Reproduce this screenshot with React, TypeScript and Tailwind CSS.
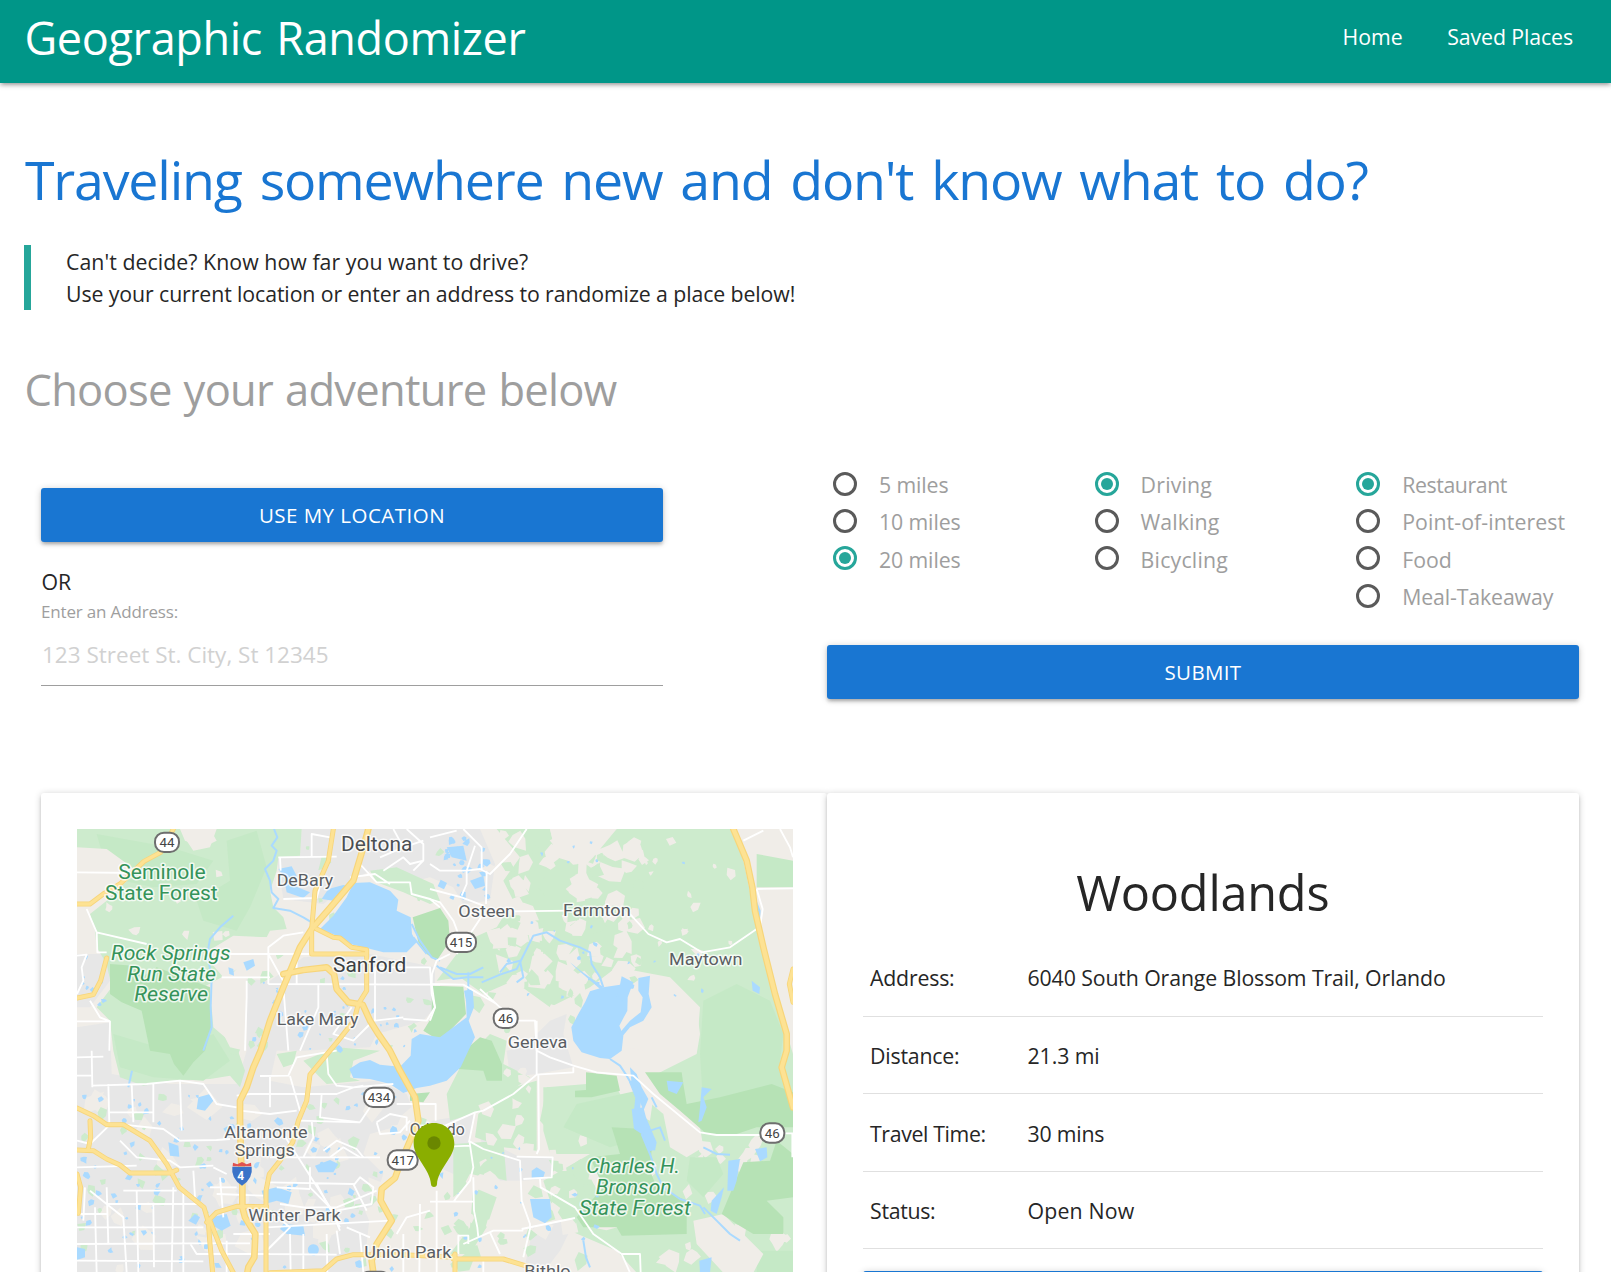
import { useState } from "react";

const SHADOW = "shadow-[0_3px_3px_0_rgba(0,0,0,0.14),0_4px_2px_-3px_rgba(0,0,0,0.12),0_1px_7px_0_rgba(0,0,0,0.2)]";

type Option = { label: string; tracking: string };

const groups: { name: string; initial: number; options: Option[] }[] = [
  {
    name: "distance",
    initial: 2,
    options: [
      { label: "5 miles", tracking: "tracking-[-0.12px]" },
      { label: "10 miles", tracking: "tracking-[-0.12px]" },
      { label: "20 miles", tracking: "tracking-[-0.12px]" },
    ],
  },
  {
    name: "travel",
    initial: 0,
    options: [
      { label: "Driving", tracking: "tracking-[0.19px]" },
      { label: "Walking", tracking: "tracking-[0.1px]" },
      { label: "Bicycling", tracking: "tracking-[0.2px]" },
    ],
  },
  {
    name: "place",
    initial: 0,
    options: [
      { label: "Restaurant", tracking: "tracking-[-0.41px]" },
      { label: "Point-of-interest", tracking: "tracking-[0.08px]" },
      { label: "Food", tracking: "tracking-[0px]" },
      { label: "Meal-Takeaway", tracking: "tracking-[-0.13px]" },
    ],
  },
];

const details = [
  { label: "Address:", value: "6040 South Orange Blossom Trail, Orlando", lt: "tracking-[-0.2px]", vt: "tracking-[-0.12px]" },
  { label: "Distance:", value: "21.3 mi", lt: "tracking-[-0.2px]", vt: "tracking-[-0.1px]" },
  { label: "Travel Time:", value: "30 mins", lt: "tracking-[-0.37px]", vt: "tracking-[-0.2px]" },
  { label: "Status:", value: "Open Now", lt: "tracking-[-0.3px]", vt: "tracking-[0.19px]" },
];

function RadioGroup({ name, initial, options }: (typeof groups)[number]) {
  const [selected, setSelected] = useState(initial);
  return (
    <div className="w-[261.6px] shrink-0">
      {options.map((o, i) => (
        <label key={o.label} className="flex h-[37.2px] items-center gap-[22px]">
          <input type="radio" name={name} className="sr-only" checked={selected === i} onChange={() => setSelected(i)} />
          <span
            className={
              selected === i
                ? "flex size-6 shrink-0 items-center justify-center rounded-full border-[3px] border-[#26a69a]"
                : "size-6 shrink-0 rounded-full border-[3px] border-[#5a5a5a]"
            }
          >
            {selected === i && <span className="size-3 rounded-full bg-[#26a69a]" />}
          </span>
          <span className={`whitespace-nowrap pt-[2px] text-[21.3px] text-[#9e9e9e] ${o.tracking}`}>{o.label}</span>
        </label>
      ))}
    </div>
  );
}

/* ---------- Map ---------- */

// Small seeded generator so the terrain texture is stable between renders.
function patches(seed: number, count: number, x0: number, y0: number, x1: number, y1: number, size: number) {
  let s = seed;
  const rnd = () => {
    s = (s * 1664525 + 1013904223) % 4294967296;
    return s / 4294967296;
  };
  let d = "";
  for (let i = 0; i < count; i++) {
    const cx = x0 + rnd() * (x1 - x0);
    const cy = y0 + rnd() * (y1 - y0);
    const r = size * (0.35 + rnd() * 0.65);
    const n = 4 + Math.floor(rnd() * 4);
    const tilt = rnd() * 6.28;
    for (let k = 0; k < n; k++) {
      const a = tilt + (k / n) * 6.28;
      const q = r * (0.4 + rnd() * 0.7);
      d += `${k ? "L" : "M"}${(cx + Math.cos(a) * q).toFixed(0)} ${(cy + Math.sin(a) * q).toFixed(0)}`;
    }
    d += "Z";
  }
  return d;
}

const beigeSpecks =
  patches(11, 85, 1260, 40, 1720, 580, 46) + patches(5, 16, 1700, 60, 1990, 480, 24) + patches(29, 12, 90, 60, 520, 360, 26) + patches(31, 40, 1200, 700, 1640, 1340, 40) + patches(37, 24, 1720, 960, 2160, 1340, 40);
const greenSpecks = patches(7, 34, 1180, 60, 1720, 640, 34) + patches(13, 60, 30, 820, 1080, 1350, 22) + patches(17, 26, 700, 60, 1180, 700, 22) + patches(19, 22, 1110, 1000, 1560, 1350, 40) + patches(61, 12, 460, 370, 640, 700, 26);
const urbanSpecks = patches(23, 50, 30, 830, 1080, 1350, 60);
const waterSpecks =
  patches(3, 95, 30, 820, 1010, 1350, 15) + patches(41, 26, 1110, 50, 1260, 230, 17) + patches(43, 24, 540, 470, 860, 700, 13) + patches(47, 26, 1300, 60, 1900, 560, 10) + patches(53, 22, 1150, 980, 1600, 1340, 11) + patches(59, 10, 30, 400, 110, 560, 14) + patches(67, 12, 900, 560, 1090, 700, 10);

const waters = [
  "M750 325L790 285 830 230 850 187 900 185 960 210 985 237 980 270 1022 290 1026 340 1040 365 1010 395 940 395 890 382 840 370 800 345Z",
  "M755 235L775 205 820 193 845 195 830 215 790 240Z",
  "M640 165L625 145 665 137 680 165 672 195 720 215 700 232 650 215Z",
  "M1025 655L1050 640 1110 650 1150 620 1190 590 1188 540 1182 510 1208 505 1212 560 1196 600 1215 650 1200 680 1172 740 1130 780 1080 795 1040 802 1000 817 960 790 900 775 850 772 838 745 870 725 900 718 930 732 990 738 1022 705Z",
  "M1560 512L1600 500 1650 492 1655 467 1690 485 1673 530 1672 570 1648 615 1660 645 1655 690 1620 715 1590 712 1535 695 1510 660 1504 620 1525 580 1545 545Z",
  "M1705 472L1740 465 1736 520 1745 560 1720 600 1680 620 1655 650 1648 638 1680 600 1712 575 1718 530 1705 510Z",
  "M1685 865L1720 860 1728 890 1745 930 1760 965 1755 990 1735 980 1715 940 1692 925Z",
  "M1680 740L1700 760 1715 800 1735 835 1720 870 1705 830 1685 790Z",
  "M1895 800L1925 805 1900 830 1910 860 1895 900 1885 905 1890 860Z",
  "M1790 780L1840 785 1820 820 1795 810Z",
  "M1975 1020L2010 1015 2000 1080 1990 1110 1972 1110Z",
  "M2055 985L2090 980 2092 1010 2070 1022Z",
  "M1925 1140L1962 1100 1955 1130 1940 1180 1922 1170Z",
  "M1380 1135L1440 1135 1445 1190 1425 1208 1390 1190Z",
  "M1385 1050L1400 1040 1425 1055 1420 1070 1385 1072Z",
  "M575 1110L620 1100 665 1115 655 1150 620 1140 585 1150Z",
  "M735 1035L780 1018 805 1030 790 1055 745 1055Z",
  "M640 1210L700 1215 705 1245 650 1240 630 1225Z",
  "M425 1190L470 1180 482 1215 455 1230 430 1215Z",
  "M385 830L420 820 430 840 405 870 380 865Z",
  "M295 965L325 975 328 1008 300 1005Z",
  "M355 1200L375 1180 390 1190 378 1212Z",
  "M21 1280L45 1285 45 1310 21 1318Z",
  "M1888 1320L1925 1310 1920 1356 1890 1356Z",
  "M1515 440L1500 425 1525 445 1600 500 1590 505Z",
  "M2045 480L2070 500 2068 520 2048 510Z",
  "M2060 240L2072 270 2068 320 2060 300Z",
  "M520 425L550 415 555 435 530 450Z",
  "M475 440L490 445 492 465 478 460Z",
  "M1130 80L1180 75 1190 120 1145 110Z",
  "M1200 180L1240 165 1245 195 1215 205Z",
  "M1105 1060L1120 1055 1118 1075Z",
  "M715 1280A16 16 0 1 1 745 1295A16 16 0 0 1 715 1280Z",
];

const rivers = [
  "M612 25L622 50 605 75 620 90 610 120 585 145 600 180 605 215 625 235 610 262 660 270 700 290 725 305",
  "M490 285L450 320 420 355 412 400 425 470 422 560 425 620 400 690",
  "M1235 485L1290 462 1340 445 1370 385 1390 345 1430 335 1470 360 1530 380 1560 395 1565 430 1590 470 1600 500",
  "M1110 440L1160 460 1200 460 1240 440M1195 455L1195 510M1100 435L1150 475 1190 470 1240 470M1290 455L1310 430 1350 420 1360 470 1340 485",
  "M1620 715L1650 735 1670 765 1690 800",
  "M1715 940L1740 1000 1760 1060 1780 1100 1830 1135 1890 1155 1905 1180",
  "M1740 930L1770 920 1785 960M1745 830L1760 860",
  "M1900 1160L1940 1200 1980 1240 2010 1260M1900 980L1940 1000 1980 1002",
  "M1540 1260L1548 1310 1560 1340",
  "M1025 310L1050 360 1085 410 1110 420M1030 350L1070 400",
  "M186 750L175 800",
];

const minorRoads = [
  "M21 155L215 157M50 265L80 335 230 370M80 335L82 395 110 395M21 405L50 402 35 440 40 480 21 520M60 540L90 590 120 602M21 602L120 602 118 690M65 690L67 800",
  "M625 110L800 108M725 110L725 40 780 50M630 110L632 150M640 235L740 232 760 160M930 110L1000 80 1060 60M940 150L1000 110 1020 130 1060 120M1000 80L970 25M1010 25L1060 70 1060 120 1030 150",
  "M870 130L920 185 1020 185 1025 220 1080 235 1110 260M840 170L915 160 960 190M480 400L600 400M595 490L595 380 640 345 700 335M600 400L725 400M595 490L1110 492M455 470L600 470M530 480L530 530 525 690M640 500L655 690M745 490L745 560 690 690M915 440L915 600 1000 590M915 440L1080 440 1085 520 1095 560 1070 600 1000 595M845 560L790 640 850 660 900 610M595 400L650 500M680 400L680 490",
  "M1080 130L1110 150 1190 150 1230 145 1260 160 1320 100 1370 25M1180 25L1235 80 1235 150M1215 75L1190 150 1190 190 1175 225M1080 205L1175 230 1240 255M1250 150L1248 250M1080 50L1160 30",
  "M1080 235L1110 245 1150 300 1165 340M1160 400L1200 340 1240 280M1330 272L1500 270M1680 280L1735 340 1790 365 1830 355 1895 395 1980 380 2060 325M2060 205L2169 203M2060 205L2078 265 2070 320M2020 60L2080 30M2130 25L2160 80 2169 110",
  "M1140 400L1100 420 1086 460 1085 490 1180 492 1280 550M1085 490L1095 560 1080 600M1230 505L1290 560 1340 600 1395 600 1400 690",
  "M1400 600L1400 760M1400 690L1440 710 1510 735 1580 755 1690 765 1750 820 1890 935 1940 943 2070 943M2145 938L2169 938M2167 940L2167 1010",
  "M1510 740L1510 755 1400 762 1330 820 1240 870 1215 875 1080 935M1405 760L1407 985 1400 1000M1215 875L1198 960 1210 1040 1200 1080 1160 1130 1150 1145M1195 960L1240 985 1350 1020 1355 1140 1380 1210 1380 1225 1360 1310M1340 1008L1448 1010 1445 1070 1360 1075M1410 1075L1412 1100 1515 1160 1570 1240 1655 1300 1680 1356M1080 1143L1210 1143M1100 1110L1100 1356M1355 1225L1515 1192M1210 1070L1212 1170 1222 1220 1225 1250M1180 1270L1270 1230 1360 1230M1260 1235L1290 1300M1165 1300L1165 1245 1195 1245 1195 1270M1655 1300L1710 1300 1712 1356M1240 1320L1240 1356M1080 850L1097 850 1097 900M1080 980L1200 975",
  "M21 710L100 708M21 765L65 765M67 795L230 790 330 780 400 790 440 850 500 860M115 790L118 912M118 875L250 875M185 790L190 905M250 790L250 905M330 780L335 930M160 912L280 925 330 960 440 958 480 955M150 960L200 1010 300 1020 330 1040 430 1035M120 912L60 970 21 960M21 1040L200 1035",
  "M500 825L540 820 600 820 800 820 850 800 880 795M770 700L775 760 800 795 850 800 970 790M600 766L600 860M570 766L655 765 680 710 800 690M660 766L690 870M510 870L600 880 680 870M710 820L755 820 750 890 870 905M870 905L900 860 920 800M690 900L870 905M640 940L780 1160 810 1230M725 900L730 950 700 1010M600 1010L930 1010M980 850L1097 850",
  "M760 990L800 960 860 985 880 1010M780 1010L820 980 870 1010M920 905L960 880 1010 890 1010 930M920 905L930 940 990 935 1020 900M600 1085L850 1090 890 1170M850 1095L870 1070 910 1100 905 1150 800 1170M720 1040L720 1100 800 1180M740 1090L810 1220M600 1170L660 1220 600 1280M630 1150L700 1160 800 1160 920 1110M800 1230L810 1300M830 1220L900 1250M590 1220L960 1200",
  "M21 1220L400 1220M21 1270L370 1268 540 1268M110 1100L115 1270M45 1100L40 1200M60 1110L160 1190 170 1356M200 1110L205 1356M250 1150L252 1340M310 1100L305 1356M160 1110L320 1110M110 1150L390 1150M21 1320L400 1322M360 1268L380 1300 600 1300M590 1300L800 1302M340 1110L340 1356M370 1050L375 1130M430 1040L470 1060M440 1120L580 1125M450 1070L460 1190M660 1240L662 1356M700 1240L700 1356M770 1240L772 1356M470 1260L470 1356M640 1240L590 1290M75 1160L80 1356M21 1180L110 1180M490 1240L600 1240M420 1100L500 1100M620 1100L720 1105M870 1240L880 1356M980 1240L1010 1190 1080 1170M1000 1240L1000 1356M1050 1150L1048 1356",
];

const highways = [
  "M310 25L272 95 222 122 150 190 100 220 60 250 21 250",
  "M110 412L92 480 70 522 21 532",
  "M790 25L775 120 735 210 725 325",
  "M725 325L725 400 890 400M740 325L790 350 810 352 845 380 890 387 890 510 865 550 852 600 800 666 720 762 710 840 685 900 668 965 630 1020 598 1060 588 1110 588 1356",
  "M21 862L70 885 110 912 160 912 240 960 290 1030 328 1100 402 1160 415 1205 420 1270 428 1356",
  "M60 900L62 950 55 985M21 988L70 990 110 1015 150 1033 180 1057 300 1057 320 1048",
  "M410 1205L440 1175 500 1157 590 1158M420 1200L455 1290 490 1356M21 1060L32 1100 25 1178",
  "M600 1356L760 1350 800 1315 850 1302 1000 1302 1150 1310 1155 1300 1155 1356M1150 1315L1300 1315 1375 1338",
  "M2169 445L2158 490 2169 545",
];

const majorHighways = [
  "M895 25L880 80 850 180 780 262 725 325 690 380 640 500 600 600 572 690 550 740 530 800 510 840 510 900 513 1010 517 1095 517 1160 525 1190 556 1240 553 1310 535 1340 532 1356",
  "M640 460L700 448 770 440 792 460 800 505 835 545 878 552 900 600 925 640 960 690 990 750 1035 830 1045 900 1020 960 990 1030 975 1072 935 1105 932 1140 965 1200 920 1270 905 1320 910 1356",
  "M1990 25L2030 120 2047 200 2055 270 2080 380 2115 520 2150 640 2150 690 2135 740 2169 860",
];

function MapLabel({ x0, x1, y, size = 50, color = "#5a5e63", italic = false, children }: {
  x0: number; x1: number; y: number; size?: number; color?: string; italic?: boolean; children: string;
}) {
  return (
    <text
      x={x0 - 3}
      y={y - 2}
      textLength={x1 - x0 + 5}
      lengthAdjust="spacingAndGlyphs"
      fontSize={size}
      fontStyle={italic ? "italic" : "normal"}
      fill={color}
      stroke="#ffffff"
      strokeWidth={9}
      strokeOpacity={0.75}
      strokeLinejoin="round"
      paintOrder="stroke"
    >
      {children}
    </text>
  );
}

function Shield({ x, y, children }: { x: number; y: number; children?: string }) {
  const w = !children || children.length > 2 ? 90 : 72;
  return (
    <g>
      <rect x={x - w / 2} y={y - 30} width={w} height={58} rx={27} fill="#fff" stroke="#6e6e6e" strokeWidth={6} />
      {children && (
        <text x={x} y={y + 13} textAnchor="middle" fontSize={40} fill="#444">
          {children}
        </text>
      )}
    </g>
  );
}

function RouteMap() {
  const green = "#35935a";
  return (
    <svg viewBox="21 25 2148 1332" className="block h-[444px] w-[716px]" preserveAspectRatio="none" fontFamily="Roboto, sans-serif">
      <rect x="21" y="25" width="2148" height="1332" fill="#f0ede8" />

      {/* built-up areas */}
      <g fill="#e7e7e7">
        <path d="M695 25H1230L1275 130 1260 240 1180 250 1150 200 1080 170 1000 190 900 150 850 180 760 250 640 235 620 110 690 105Z" />
        <path d="M530 475L600 480 700 410 900 400 1095 440 1095 560 1060 600 920 640 900 680 700 690 620 690 600 780 700 800 920 780 1010 820 1040 900 900 940 880 1000 940 1060 900 1180 880 1356H21V620L120 605 125 760 300 790 500 790 530 690Z" />
        <path d="M21 400L110 400 120 480 60 560 21 560ZM1310 690L1360 680 1440 600 1490 580 1480 640 1510 740 1400 760 1320 770Z" />
        <path d="M1085 900L1210 880 1200 980 1150 1060 1085 1030ZM1230 950L1350 1010 1450 1010 1445 1075 1350 1080 1270 1080ZM1390 1220L1520 1190 1470 1290 1420 1356 1360 1356Z" />
      </g>
      <path d={urbanSpecks} fill="#f0ede8" />

      {/* woodland */}
      <g fill="#cdebcd">
        <path d="M21 25H330L345 60 400 80 440 60 420 25H695L690 105 625 110 620 150 600 210 610 260 640 290 650 325 590 350 490 350 470 400 455 470 400 500 425 560 430 620 500 680 525 750 510 800 480 765 420 775 300 780 220 795 150 770 130 690 120 600 80 560 125 500 110 430 80 380 75 330 60 280 110 240 160 190 210 150 21 150Z" />
        <path d="M1280 25H1440L1455 90 1530 130 1600 60 1640 25H2000L2050 260 2080 400 2169 700V25L2020 25 2169 25V1356H1700L1640 1290 1500 1230 1440 1140 1420 1080 1560 1000 1480 980 1410 900 1430 800 1550 790 1640 850 1740 900 1760 760 1880 690 1890 560 1800 470 1640 440 1560 500 1440 560 1330 480 1240 520 1170 470 1100 480 1190 360 1280 320 1330 240 1300 180 1350 110Z" />
        <path d="M900 150L980 140 1090 190 1110 240 1080 250 1000 215 920 185ZM1180 720L1260 640 1310 660 1300 730 1380 770 1240 870 1140 900 1130 820ZM1150 970L1300 960 1310 1080 1230 1060 1150 1130ZM1210 1100L1280 1130 1250 1220 1200 1300 1140 1300 1200 1220ZM620 700L680 690 670 730 640 740ZM700 720L800 680 930 690 850 720 840 770 870 780 770 790Z" />
        <path d="M1250 860L1330 800 1400 780 1400 990 1300 980 1215 950 1225 880ZM1420 800L1640 800 1720 960 1640 1000 1530 1000 1440 1000 1420 930Z" />
      </g>
      <path d={beigeSpecks} fill="#f0ede8" />
      <path d={greenSpecks} fill="#cdebcd" />
      <g fill="#c5e9c6">
        <path d="M80 40L300 80 430 120 380 190 250 200 160 180 100 110ZM470 60L560 30 590 140 540 260 500 330 400 300 380 240 480 180ZM130 640L300 690 430 640 480 720 400 780 250 770 150 740Z" />
        <path d="M1900 540L2000 490 2100 540 2140 640 2130 720 2160 800 2040 830 1900 860 1890 700ZM2060 100L2169 120V200H2060ZM1520 850L1700 810 1690 960 1620 980 1480 920ZM1860 1010L1940 1010 1960 1060 1900 1130 1850 1080ZM2060 1290H2169V1356H2060Z" />
      </g>
      <g fill="#f0ede8">
        <path d="M1440 25H1640L1570 110 1550 130 1545 240 1520 245 1525 130 1460 110Z" />
        <path d="M1760 600L1880 560 1890 640 1880 700 1760 760 1720 690 1670 680Z" />
        <path d="M1650 720L1760 770 1820 800 1850 880 1890 920 1900 980 1850 1010 1800 980 1780 880 1720 830Z" />
        <path d="M1870 1200L1960 1180 2040 1260 2080 1300 2050 1356 1960 1356 1880 1270ZM21 80L110 85 200 150 150 200 90 235 21 245ZM345 25H440L420 80 370 90 350 60Z" />
        <path d="M490 345L590 350 600 330 650 325 640 400 560 410 460 470 400 400ZM430 540L520 500 525 690 480 680 440 600Z" />
      </g>
      <g fill="#b6e2b5">
        <path d="M120 430L190 435 215 470 260 440 420 500 425 620 405 690 370 725 340 765 312 730 300 700 240 690 215 570 155 545 120 520Z" />
        <path d="M1028 290L1110 262 1135 300 1140 360 1100 420 1070 400 1045 365ZM1085 495L1180 498 1188 580 1130 640 1100 655 1060 630 1085 590ZM1195 680L1230 650 1265 660 1296 730V780L1250 780 1240 750 1165 745Z" />
        <path d="M1548 755L1640 765 1650 810 1565 830 1515 830 1515 810 1548 808ZM1725 755H1835L1840 790 1850 850 1950 830 2105 790 2169 815V920H2060L2000 940H1910L1830 870 1770 820Z" />
        <path d="M1625 920L1720 925 1745 985 1740 1050 1760 1100 1850 1140 1850 1240 1655 1245 1640 1220 1540 1220 1520 1190 1600 1100 1560 1010 1650 1000Z" />
        <path d="M2020 1025L2100 1020 2120 960 2169 1000V1130L2090 1140 2140 1190V1240H2050L2000 1210 1955 1180ZM1020 820L1080 815 1060 845 1020 840Z" />
      </g>

      {/* water */}
      <g fill="#aadaff">
        {waters.map((d) => (
          <path key={d} d={d} />
        ))}
        <path d={waterSpecks} />
      </g>
      <g fill="none" stroke="#aadaff" strokeWidth={6} strokeLinejoin="round">
        {rivers.map((d) => (
          <path key={d} d={d} />
        ))}
        <path d="M1685 780L1705 830 1700 880 1730 930 1745 990" strokeWidth={18} />
      </g>

      {/* roads */}
      <g fill="none" stroke="#ffffff" strokeWidth={5.5} strokeLinejoin="round">
        {minorRoads.map((d) => (
          <path key={d} d={d} />
        ))}
      </g>
      <g fill="none" strokeLinejoin="round" strokeLinecap="round">
        <g stroke="#f7d57a" strokeWidth={15}>
          {highways.map((d) => (
            <path key={d} d={d} />
          ))}
        </g>
        <g stroke="#f7d57a" strokeWidth={20}>
          {majorHighways.map((d) => (
            <path key={d} d={d} />
          ))}
        </g>
        <g stroke="#fde293" strokeWidth={10}>
          {highways.map((d) => (
            <path key={d} d={d} />
          ))}
        </g>
        <g stroke="#fde293" strokeWidth={13}>
          {majorHighways.map((d) => (
            <path key={d} d={d} />
          ))}
        </g>
      </g>

      {/* labels */}
      <MapLabel x0={148} x1={405} y={178} size={58} color={green}>Seminole</MapLabel>
      <MapLabel x0={108} x1={441} y={240} size={58} color={green}>State Forest</MapLabel>
      <MapLabel x0={126} x1={480} y={420} size={58} color={green} italic>Rock Springs</MapLabel>
      <MapLabel x0={175} x1={436} y={482} size={58} color={green} italic>Run State</MapLabel>
      <MapLabel x0={196} x1={412} y={544} size={58} color={green} italic>Reserve</MapLabel>
      <MapLabel x0={816} x1={1025} y={93} size={62} color="#4c4f53">Deltona</MapLabel>
      <MapLabel x0={792} x1={1007} y={456} size={62} color="#3c3f43">Sanford</MapLabel>
      <MapLabel x0={623} x1={788} y={197}>DeBary</MapLabel>
      <MapLabel x0={623} x1={863} y={614}>Lake Mary</MapLabel>
      <MapLabel x0={1168} x1={1333} y={291}>Osteen</MapLabel>
      <MapLabel x0={1482} x1={1680} y={287}>Farmton</MapLabel>
      <MapLabel x0={1800} x1={2015} y={434}>Maytown</MapLabel>
      <MapLabel x0={1316} x1={1490} y={684}>Geneva</MapLabel>
      <MapLabel x0={466} x1={711} y={955}>Altamonte</MapLabel>
      <MapLabel x0={497} x1={672} y={1007}>Springs</MapLabel>
      <MapLabel x0={538} x1={810} y={1202}>Winter Park</MapLabel>
      <MapLabel x0={886} x1={1142} y={1315}>Union Park</MapLabel>
      <MapLabel x0={1022} x1={1182} y={944}>Orlando</MapLabel>
      <MapLabel x0={1366} x1={1500} y={1371}>Bithlo</MapLabel>
      <MapLabel x0={1552} x1={1828} y={1059} size={58} color={green} italic>Charles H.</MapLabel>
      <MapLabel x0={1580} x1={1803} y={1121} size={58} color={green} italic>Bronson</MapLabel>
      <MapLabel x0={1530} x1={1860} y={1184} size={58} color={green} italic>State Forest</MapLabel>

      <Shield x={291} y={66}>44</Shield>
      <Shield x={1173} y={366}>415</Shield>
      <Shield x={1307} y={594}>46</Shield>
      <Shield x={927} y={831}>434</Shield>
      <Shield x={998} y={1019}>417</Shield>
      <Shield x={2107} y={938}>46</Shield>
      <Shield x={915} y={1383} />

      {/* interstate shield */}
      <path d="M487 1038H545Q550 1073 516 1095Q482 1073 487 1038Z" fill="#3b73c8" />
      <path d="M489 1026L502 1031 516 1024 530 1031 543 1026 544 1037H488Z" fill="#e0524f" />
      <text x="512" y="1077" textAnchor="middle" fontSize="36" fontWeight="700" fill="#fff">4</text>

      {/* location pin */}
      <path d="M1092 907C1056 907 1031 934 1031 969C1031 1010 1081 1045 1083 1091Q1084 1099 1092 1099Q1100 1099 1101 1091C1103 1045 1153 1010 1153 969C1153 934 1128 907 1092 907Z" fill="#8aae00" />
      <circle cx="1092" cy="967" r="20" fill="#6a8700" />
    </svg>
  );
}

export default function App() {
  return (
    <div className="flex h-[1272px] w-full flex-col overflow-hidden bg-white font-['Open_Sans','Noto_Sans',sans-serif] text-[21.3px] text-[#262626]">
      <header className={`flex h-[83px] shrink-0 items-start justify-between bg-[#009688] pr-[38px] pl-[24.5px] text-white ${SHADOW}`}>
        <h1 className="text-[45px] leading-[76px] tracking-[-0.35px] [word-spacing:3px]">Geographic Randomizer</h1>
        <nav className="flex gap-[44.5px] leading-[74px]">
          <a className="tracking-[0px]">Home</a>
          <a className="tracking-[-0.1px]">Saved Places</a>
        </nav>
      </header>

      <main className="flex flex-1 flex-col px-6">
        <h2 className="mt-[66px] pl-px text-[53.7px] leading-[62px] tracking-[-1.2px] whitespace-nowrap text-[#1976d2] [word-spacing:5.2px]">
          Traveling somewhere new and don't know what to do?
        </h2>
        <blockquote className="mt-[33.5px] h-[65.5px] border-l-[7px] border-[#26a69a] pt-px pl-[35px] leading-[32.8px]">
          <p className="tracking-[0.05px]">Can't decide? Know how far you want to drive?</p>
          <p className="tracking-[-0.1px]">Use your current location or enter an address to randomize a place below!</p>
        </blockquote>
        <h3 className="mt-[55.5px] pl-[0.5px] text-[43.5px] leading-[48px] tracking-[-0.75px] text-[#9e9e9e] [word-spacing:1.5px]">Choose your adventure below</h3>

        <section className="mt-[52px] flex h-[327px] shrink-0 items-start px-[17px]">
          <div className="w-[622px] shrink-0 pt-[22.5px]">
            <button className={`block h-[54px] w-full rounded-[3px] bg-[#1976d2] pt-px text-[20.5px] tracking-[0.48px] text-white ${SHADOW}`}>
              USE MY LOCATION
            </button>
            <p className="mt-[22.5px] pl-[0.5px] leading-[33px]">OR</p>
            <label className="mt-px block text-[17px] leading-[26px] tracking-[-0.17px] text-[#9e9e9e]">Enter an Address:</label>
            <input
              className="block h-[61.5px] w-full border-b border-[#9e9e9e] px-px pb-px text-[22.5px] outline-none placeholder:text-[#d1d1d1] placeholder:opacity-100"
              placeholder="123 Street St. City, St 12345"
            />
          </div>
          <div className="ml-[164px] w-[752px] shrink-0">
            <div className="flex h-[179.5px] pl-[6px]">
              {groups.map((g) => (
                <RadioGroup key={g.name} {...g} />
              ))}
            </div>
            <button className={`block h-[54px] w-full rounded-[3px] bg-[#1976d2] pt-px text-[20.5px] tracking-[0.35px] text-white ${SHADOW}`}>
              SUBMIT
            </button>
          </div>
        </section>

        <section className="flex flex-1 px-[17px]">
          <div className={`w-[786px] shrink-0 rounded-[3px] bg-white pt-9 pl-9 ${SHADOW}`}>
            <RouteMap />
          </div>
          <div className={`h-[600px] w-[751.5px] shrink-0 rounded-[3px] bg-white px-9 pt-[69.5px] ${SHADOW}`}>
            <h3 className="text-center text-[48.6px] leading-[60px] tracking-[-0.2px]">Woodlands</h3>
            <dl className="mt-[17px]">
              {details.map((d) => (
                <div key={d.label} className="flex h-[77.6px] items-center border-b border-[#e0e0e0] pt-[2px] pl-[7px]">
                  <dt className={`w-[157.5px] ${d.lt}`}>{d.label}</dt>
                  <dd className={d.vt}>{d.value}</dd>
                </div>
              ))}
            </dl>
            <button className={`mt-[22px] block h-[54px] w-full rounded-[3px] bg-[#1976d2] ${SHADOW}`} aria-label="Save place" />
          </div>
        </section>
      </main>
    </div>
  );
}
